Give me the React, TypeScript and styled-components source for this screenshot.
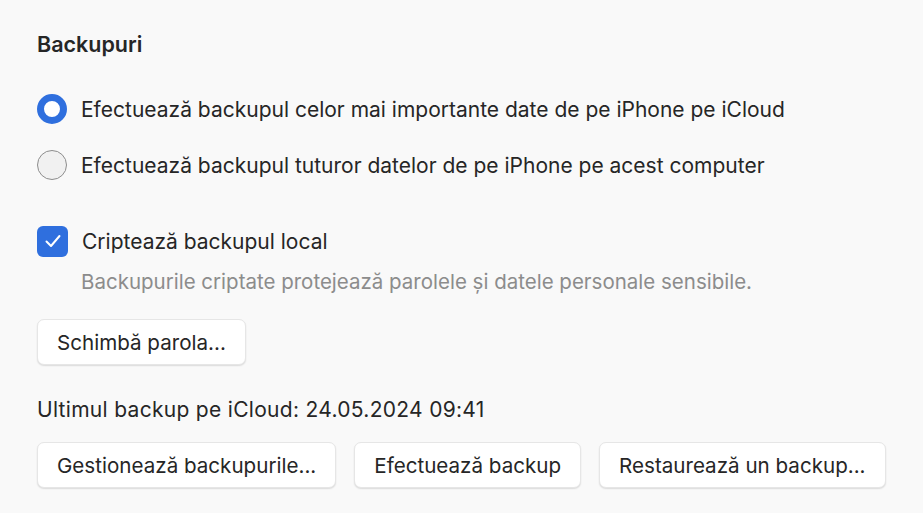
import styled, { createGlobalStyle } from "styled-components";

const Global = createGlobalStyle`
  html, body {
    margin: 0;
    padding: 0;
    background: #f9f9f9;
  }
  body {
    font-family: Inter, "Noto Sans", sans-serif;
    color: #262626;
    -webkit-font-smoothing: antialiased;
  }
`;

const Panel = styled.div`
  width: 923px;
  height: 513px;
  box-sizing: border-box;
  padding: 32px 0 0 37px;
  display: flex;
  flex-direction: column;
`;

const Heading = styled.div`
  font-size: 21.5px;
  font-weight: 600;
  line-height: 24px;
  margin-bottom: 38px;
`;

const OptionRow = styled.label<{ $gap?: number }>`
  display: flex;
  align-items: center;
  gap: 14px;
  height: 30px;
  font-size: 21px;
  margin-bottom: ${(p) => p.$gap ?? 0}px;
`;

const Radio = styled.span<{ $on?: boolean }>`
  width: 30px;
  height: 30px;
  box-sizing: border-box;
  border-radius: 50%;
  flex-shrink: 0;
  ${(p) =>
    p.$on
      ? `background: #fff; border: 7px solid #2f6fde;`
      : `background: #f1f1f1; border: 1.5px solid #8d8d8d;`}
`;

const Check = styled.span`
  width: 31px;
  height: 31px;
  border-radius: 6px;
  background: #2f6fde;
  flex-shrink: 0;
  display: flex;
  align-items: center;
  justify-content: center;
`;

const Hint = styled.div`
  font-size: 20.5px;
  color: #8c8c8c;
  line-height: 24px;
  padding-left: 44px;
  margin-top: 14px;
  margin-bottom: 25px;
`;

const Button = styled.button`
  height: 46px;
  box-sizing: border-box;
  padding: 0 19px;
  background: #fff;
  border: 1px solid #e6e6e6;
  border-radius: 7px;
  box-shadow: 0 1px 1.5px rgba(0, 0, 0, 0.12);
  font-family: inherit;
  font-size: 20.6px;
  color: #262626;
  white-space: nowrap;
`;

const Single = styled.div`
  display: flex;
`;

const Status = styled.div`
  font-size: 21px;
  letter-spacing: 0.3px;
  line-height: 24px;
  margin-top: 33px;
  margin-bottom: 20px;
`;

const ButtonRow = styled.div`
  display: flex;
  gap: 18px;
`;

export default function App() {
  return (
    <>
      <Global />
      <Panel>
        <Heading>Backupuri</Heading>
        <OptionRow $gap={26}>
          <Radio $on />
          Efectuează backupul celor mai importante date de pe iPhone pe iCloud
        </OptionRow>
        <OptionRow $gap={46}>
          <Radio />
          Efectuează backupul tuturor datelor de pe iPhone pe acest computer
        </OptionRow>
        <OptionRow>
          <Check>
            <svg width="18" height="14" viewBox="0 0 18 14" fill="none">
              <path
                d="M2.5 7.5l4.5 4.5 8.5-10"
                stroke="#fff"
                strokeWidth="2"
                strokeLinecap="round"
                strokeLinejoin="round"
              />
            </svg>
          </Check>
          Criptează backupul local
        </OptionRow>
        <Hint>Backupurile criptate protejează parolele și datele personale sensibile.</Hint>
        <Single>
          <Button>Schimbă parola...</Button>
        </Single>
        <Status>Ultimul backup pe iCloud: 24.05.2024 09:41</Status>
        <ButtonRow>
          <Button>Gestionează backupurile...</Button>
          <Button>Efectuează backup</Button>
          <Button>Restaurează un backup...</Button>
        </ButtonRow>
      </Panel>
    </>
  );
}
